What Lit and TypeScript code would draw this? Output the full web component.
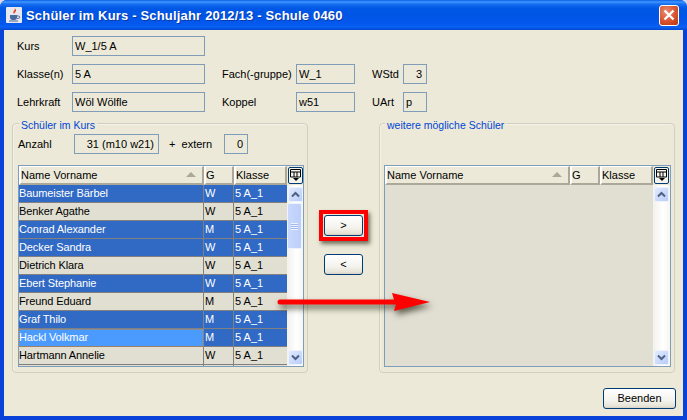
import { LitElement, html, css, svg } from "lit";
import { customElement } from "lit/decorators.js";

const ROWS: [string, string, string, boolean][] = [
  ["Baumeister Bärbel", "W", "5 A_1", true],
  ["Benker Agathe", "W", "5 A_1", false],
  ["Conrad Alexander", "M", "5 A_1", true],
  ["Decker Sandra", "W", "5 A_1", true],
  ["Dietrich Klara", "W", "5 A_1", false],
  ["Ebert Stephanie", "W", "5 A_1", true],
  ["Freund Eduard", "M", "5 A_1", false],
  ["Graf Thilo", "M", "5 A_1", true],
  ["Hackl Volkmar", "M", "5 A_1", true],
  ["Hartmann Annelie", "W", "5 A_1", false],
  ["", "", "", false],
];

@customElement("app-root")
export class AppRoot extends LitElement {
  static styles = css`
    :host {
      display: block;
      position: relative;
      width: 687px;
      height: 420px;
      overflow: hidden;
      font-family: "Liberation Sans", Arial, sans-serif;
      font-size: 11px;
      color: #000;
      background: #d8d8ea;
    }
    .window {
      display: flex;
      flex-direction: column;
      height: 420px;
      border-radius: 7px 7px 0 0;
      overflow: hidden;
      background: #0842d8;
    }
    .titlebar {
      height: 30px;
      flex: none;
      display: flex;
      align-items: center;
      padding: 0 7px 0 6px;
      gap: 4px;
      background: linear-gradient(180deg, #0a5fe8 0, #3f97ff 2px, #1a6ff0 4px, #0058e6 8px, #0055e5 50%, #0458ee 80%, #0a61f2 90%, #0347d0 100%);
    }
    .app-icon { width: 16px; height: 16px; flex: none; }
    .title {
      flex: 1;
      color: #fff;
      font-weight: bold;
      font-size: 13px;
      letter-spacing: 0.18px;
      white-space: nowrap;
      text-shadow: 1px 1px 0 #0a3aa8;
    }
    .close {
      width: 20px;
      height: 21px;
      flex: none;
      margin-right: 1px;
      box-sizing: border-box;
      border: 1px solid #fff;
      border-radius: 3px;
      background: radial-gradient(circle at 35% 30%, #e98a6e 0, #d9532f 55%, #b83410 100%);
      display: flex;
      align-items: center;
      justify-content: center;
    }
    .frame {
      flex: 1;
      display: flex;
      padding: 0 4px 4px;
      min-height: 0;
    }
    .client {
      flex: 1;
      background: #ece9d8;
      display: flex;
      flex-direction: column;
      padding-top: 6px;
    }
    .form {
      display: grid;
      grid-template-columns: 55px 133px 17px 74px 59px 17px 31px 24px;
      grid-template-rows: 20px 20px 20px;
      row-gap: 8px;
      padding-left: 13px;
      align-items: center;
    }
    .form .f1 { grid-column: 4; }
    .form .f2 { grid-column: 5; }
    .form .f3 { grid-column: 7; }
    .form .f4 { grid-column: 8; }
    .field {
      box-sizing: border-box;
      height: 20px;
      border: 1px solid #7f9db9;
      padding: 0 2px;
      line-height: 18px;
      white-space: nowrap;
      overflow: hidden;
    }
    .field.right { text-align: right; padding-right: 4px; }
    .groups {
      display: flex;
      margin-top: 11px;
      padding-left: 8px;
    }
    .group {
      box-sizing: border-box;
      width: 296px;
      height: 250px;
      border: 1px solid #d0d0bf;
      box-shadow: inset 1px 1px 0 #f4f2e8;
      border-radius: 4px;
      display: flex;
      flex-direction: column;
      padding: 0 3px 5px 5px;
    }
    .group.second { padding-left: 4px; }
    .legend {
      align-self: flex-start;
      margin: -5px 0 0 1px;
      padding: 0 2px;
      height: 13px;
      line-height: 13px;
      font-size: 10.5px;
      background: #ece9d8;
      color: #0046d5;
      white-space: nowrap;
    }
    .count {
      display: flex;
      align-items: center;
      margin-top: 2px;
      height: 20px;
    }
    .count .lab { width: 56px; }
    .count .num { width: 85px; }
    .count .plus { width: 65px; padding-left: 10px; box-sizing: border-box; }
    .count .ext { width: 24px; }
    .table {
      margin-top: auto;
      box-sizing: border-box;
      height: 202px;
      border: 1px solid #7f9db9;
      display: flex;
      background: #e1dfd2;
      overflow: hidden;
    }
    .main { width: 268px; flex: none; display: flex; flex-direction: column; }
    .thead { display: flex; height: 19px; flex: none; }
    .th {
      box-sizing: border-box;
      background: #ece9d8;
      border-top: 1px solid #fff;
      border-left: 2px solid #fff;
      border-right: 2px solid #aca899;
      border-bottom: 2px solid #aca899;
      padding-left: 0;
      line-height: 16px;
      white-space: nowrap;
      position: relative;
    }
    .c1 { width: 185px; flex: none; }
    .c2 { width: 30px; flex: none; }
    .c3 { width: 53px; flex: none; }
    .sort {
      position: absolute;
      right: 6px;
      top: 5px;
      width: 0;
      height: 0;
      border-left: 5px solid transparent;
      border-right: 5px solid transparent;
      border-bottom: 5px solid #aca899;
    }
    .row { display: flex; height: 18px; flex: none; }
    .td {
      box-sizing: border-box;
      height: 18px;
      padding-left: 1px;
      line-height: 17px;
      border-right: 1px solid #808080;
      border-bottom: 1px solid #808080;
      white-space: nowrap;
      overflow: hidden;
    }
    .td.c1 { padding-left: 0; letter-spacing: -0.1px; }
    .row .td.c3 { border-right: none; }
    .row.sel .td { background: #316ac5; color: #fff; }
    .row.sel .td.focus {
      background: #4b9bff;
      outline: 1px dotted #c08040;
      outline-offset: -1px;
    }
    .side {
      flex: 1;
      display: flex;
      flex-direction: column;
      background: linear-gradient(90deg, #f3f1ec, #fff 60%, #f6f5f0);
      padding-bottom: 1px;
    }
    .corner {
      box-sizing: border-box;
      height: 19px;
      flex: none;
      background: #ece9d8;
      display: flex;
      align-items: center;
      justify-content: center;
    }
    .cornerbtn {
      box-sizing: border-box;
      width: 15px;
      height: 17px;
      border: 1px solid #003c74;
      border-radius: 2px;
      background: #f5f4ec;
      display: flex;
      align-items: center;
      justify-content: center;
    }
    .sb {
      box-sizing: border-box;
      height: 15px;
      width: 15px;
      margin-left: 1px;
      flex: none;
      border: 1px solid #eef2fd;
      border-radius: 2px;
      background: linear-gradient(135deg, #e1eafe, #b9ccf9);
      display: flex;
      align-items: center;
      justify-content: center;
    }
    .sb.up { margin-top: 2px; }
    .track { flex: 1; padding-top: 1px; }
    .thumb {
      box-sizing: border-box;
      height: 46px;
      width: 15px;
      border: 1px solid #eef2fd;
      border-radius: 2px;
      background: linear-gradient(90deg, #c9d8fc, #bccefa);
      display: flex;
      align-items: center;
      justify-content: center;
    }
    .grip {
      width: 7px;
      height: 7px;
      background: repeating-linear-gradient(180deg, #eef3ff 0 1px, #a0b8ef 1px 2px);
    }
    .middle {
      width: 71px;
      flex: none;
      display: flex;
      flex-direction: column;
      align-items: center;
      box-sizing: border-box;
      padding-top: 87px;
    }
    .mark {
      border: 4px solid #ff0000;
      padding: 1px;
      box-shadow: 2px 3px 4px rgba(60, 60, 40, 0.7);
      display: flex;
    }
    .btn {
      box-sizing: border-box;
      border: 1px solid #003c74;
      border-radius: 3px;
      background: linear-gradient(180deg, #fff 0, #f4f3ee 60%, #e6e3d6 90%, #d6d0c5 100%);
      text-align: center;
      font-size: 11px;
      white-space: nowrap;
    }
    .move { width: 39px; height: 21px; line-height: 19px; }
    .back { margin-top: 13px; }
    .footer {
      display: flex;
      justify-content: flex-end;
      padding: 15px 7px 0 0;
    }
    .quit { width: 73px; height: 21px; line-height: 19px; }
    .arrow {
      position: absolute;
      left: 272px;
      top: 288px;
      width: 170px;
      height: 34px;
      filter: drop-shadow(2px 4px 3px rgba(50, 50, 30, 0.75));
    }
  `;

  private upIcon() {
    return svg`<svg width="9" height="7" viewBox="0 0 9 7"><path d="M1 5.5 4.5 2 8 5.5" fill="none" stroke="#4d6185" stroke-width="2"/></svg>`;
  }
  private downIcon() {
    return svg`<svg width="9" height="7" viewBox="0 0 9 7"><path d="M1 1.5 4.5 5 8 1.5" fill="none" stroke="#4d6185" stroke-width="2"/></svg>`;
  }

  private table(rows: typeof ROWS, thumb: boolean) {
    return html`<div class="table">
      <div class="main">
        <div class="thead">
          <div class="th c1">Name Vorname<span class="sort"></span></div>
          <div class="th c2">G</div>
          <div class="th c3">Klasse</div>
        </div>
        ${rows.map(
          (r, i) => html`<div class="row ${r[3] ? "sel" : ""}">
            <div class="td c1 ${i === 8 ? "focus" : ""}">${r[0]}</div>
            <div class="td c2">${r[1]}</div>
            <div class="td c3">${r[2]}</div>
          </div>`
        )}
      </div>
      <div class="side">
        <div class="corner">
          <div class="cornerbtn">
            <svg width="11" height="13" viewBox="0 0 11 13">
              <path d="M.5 .5h10v7.5h-10zM.5 3h10M4 3v5M7 3v5" fill="none" stroke="#000"/>
              <path d="M3 9h6l-3 3z" fill="#000"/>
            </svg>
          </div>
        </div>
        <div class="sb up">${this.upIcon()}</div>
        <div class="track">
          ${thumb ? html`<div class="thumb"><div class="grip"></div></div>` : ""}
        </div>
        <div class="sb">${this.downIcon()}</div>
      </div>
    </div>`;
  }

  render() {
    return html`
      <div class="window">
        <div class="titlebar">
          <svg class="app-icon" viewBox="0 0 16 16">
            <rect x="0" y="0" width="16" height="16" rx="1" fill="#e8e8ef"/>
            <path d="M8.5 1c1.5 2-2 3-1 5 .4.8 1 1 1 1-.4-1 .3-1.6 1.2-2.6.8-.9.4-2.2-1.2-3.4z" fill="#e2421f"/>
            <path d="M4 8h7v3a2.5 2.5 0 0 1-2.5 2h-2A2.5 2.5 0 0 1 4 11z" fill="#4a6a9c"/>
            <path d="M11 9h1.5a1 1 0 0 1 0 2.4H11" fill="none" stroke="#4a6a9c"/>
            <path d="M3 14h9" stroke="#4a6a9c"/>
          </svg>
          <div class="title">Schüler im Kurs - Schuljahr 2012/13 - Schule 0460</div>
          <div class="close">
            <svg width="12" height="12" viewBox="0 0 12 12">
              <path d="M1.5 1.5 10.5 10.5M10.5 1.5 1.5 10.5" stroke="#fff" stroke-width="2.4"/>
            </svg>
          </div>
        </div>
        <div class="frame">
          <div class="client">
            <div class="form">
              <div>Kurs</div>
              <div class="field">W_1/5 A</div>
              <div></div><div></div><div></div><div></div><div></div><div></div>
              <div>Klasse(n)</div>
              <div class="field">5 A</div>
              <div class="f1">Fach(-gruppe)</div>
              <div class="field f2">W_1</div>
              <div class="f3">WStd</div>
              <div class="field right f4">3</div>
              <div>Lehrkraft</div>
              <div class="field">Wöl Wölfle</div>
              <div class="f1">Koppel</div>
              <div class="field f2">w51</div>
              <div class="f3">UArt</div>
              <div class="field f4">p</div>
            </div>
            <div class="groups">
              <div class="group">
                <div class="legend">Schüler im Kurs</div>
                <div class="count">
                  <div class="lab">Anzahl</div>
                  <div class="field right num">31 (m10 w21)</div>
                  <div class="plus">+&nbsp; extern</div>
                  <div class="field right ext">0</div>
                </div>
                ${this.table(ROWS, true)}
              </div>
              <div class="middle">
                <div class="mark"><div class="btn move">&gt;</div></div>
                <div class="btn move back">&lt;</div>
              </div>
              <div class="group second">
                <div class="legend">weitere mögliche Schüler</div>
                ${this.table([], false)}
              </div>
            </div>
            <div class="footer"><div class="btn quit">Beenden</div></div>
          </div>
        </div>
      </div>
      <svg class="arrow" viewBox="0 0 170 34">
        <path d="M8 11.5H122L120 5 158 14 122 23 124 16.5H8a2.5 2.5 0 0 1 0-5z" fill="#ff0000"/>
      </svg>
    `;
  }
}
